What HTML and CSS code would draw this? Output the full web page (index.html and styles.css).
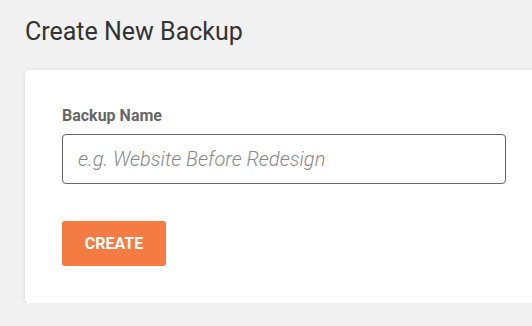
FILE: index.html
```html
<!DOCTYPE html>
<html>
<head>
<meta charset="utf-8">
<link rel="stylesheet" href="styles.css">
</head>
<body>
<div class="page">
  <h1 class="title">Create New Backup</h1>
  <div class="card">
    <label class="label" for="bname">Backup Name</label>
    <input class="input" id="bname" type="text" placeholder="e.g. Website Before Redesign">
    <button class="btn">CREATE</button>
  </div>
</div>
</body>
</html>
```
FILE: styles.css
```css
html, body {
  margin: 0;
  padding: 0;
  background: #f1f1f1;
  overflow: hidden;
  font-family: Roboto, "Liberation Sans", sans-serif;
}
.page {
  padding: 17px 0 0 25px;
  width: 507px;
  overflow: hidden;
}
.title {
  margin: 0;
  font-size: 25px;
  font-weight: 400;
  color: #333;
  line-height: 29px;
}
.card {
  margin-top: 24px;
  margin-right: -37px;
  background: #fff;
  border-radius: 4px 0 0 4px;
  box-shadow: 0 1px 4px rgba(0,0,0,0.12);
  padding: 36px 0 37px 37px;
  display: flex;
  flex-direction: column;
  align-items: flex-start;
}
.label {
  font-size: 16px;
  font-weight: 700;
  color: #666;
  line-height: 20px;
  margin-bottom: 8px;
}
.input {
  box-sizing: border-box;
  width: 444px;
  height: 50px;
  border: 1px solid #666;
  border-radius: 4px;
  padding: 0 15px;
  font-family: Roboto, "Liberation Sans", sans-serif;
  font-size: 20px;
  font-style: italic;
  font-weight: 300;
  color: #333;
  outline: none;
}
.input::placeholder {
  color: #888;
}
.btn {
  margin-top: 37px;
  width: 104px;
  height: 45px;
  background: #f47c43;
  border: none;
  border-radius: 3px;
  color: #fff;
  font-family: Roboto, "Liberation Sans", sans-serif;
  font-size: 16px;
  font-weight: 700;
  padding: 0;
}
```
